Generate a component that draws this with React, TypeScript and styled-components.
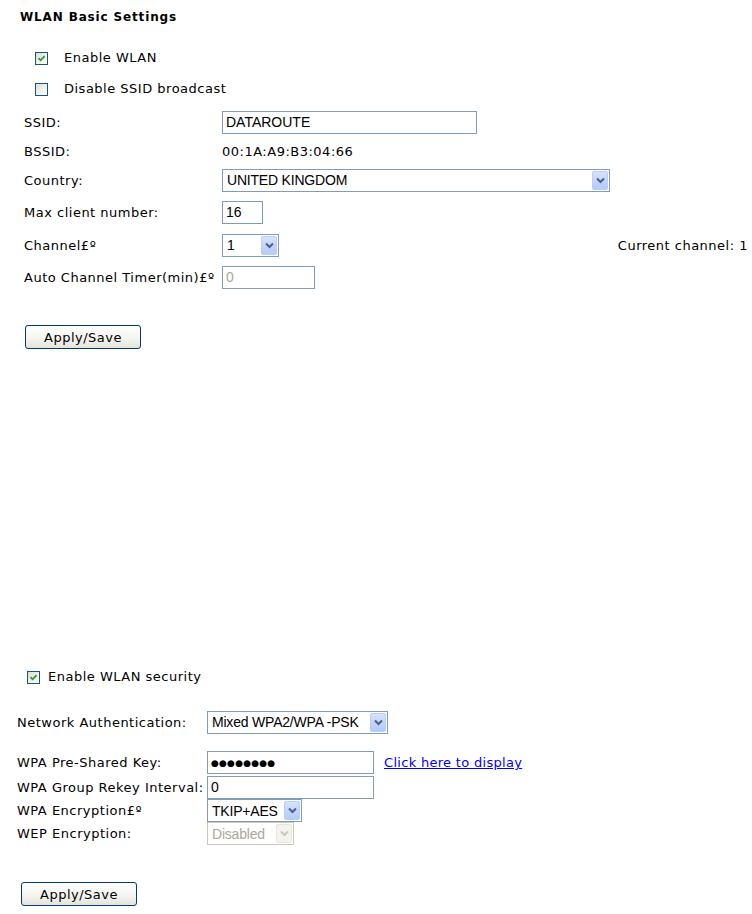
import * as React from 'react';
import styled, { createGlobalStyle } from 'styled-components';

const GlobalStyle = createGlobalStyle`
  html, body {
    margin: 0;
    padding: 0;
    background: #fff;
  }
  body {
    font-family: "DejaVu Sans", Verdana, sans-serif;
    font-size: 13px;
    letter-spacing: 0.5px;
    color: #000;
  }
`;

const Page = styled.div`
  width: 752px;
  height: 914px;
  position: relative;
  overflow: hidden;
`;

const Title = styled.div`
  font-weight: bold;
  font-size: 12px;
  letter-spacing: 0.85px;
  padding: 10px 0 0 20px;
  height: 14px;
  line-height: 14px;
`;

const CheckRow = styled.label<{ $top: number; $left: number; $gap: number }>`
  display: flex;
  align-items: center;
  gap: ${(p) => p.$gap}px;
  margin-top: ${(p) => p.$top}px;
  padding-left: ${(p) => p.$left}px;
  height: 14px;
  line-height: 14px;
`;

const Box = styled.span`
  width: 11px;
  height: 11px;
  border: 1px solid #1c5180;
  background: linear-gradient(135deg, #dcdcd7 0%, #f6f6f4 70%, #fff 100%);
  display: inline-flex;
  align-items: center;
  justify-content: center;
`;

const Table = styled.div<{ $top: number; $left: number; $labelW: number }>`
  display: grid;
  grid-template-columns: ${(p) => p.$labelW}px 1fr;
  margin-top: ${(p) => p.$top}px;
  padding-left: ${(p) => p.$left}px;
`;

const Label = styled.div<{ $h: number }>`
  height: ${(p) => p.$h}px;
  display: flex;
  align-items: center;
  white-space: nowrap;
`;

const Cell = styled.div<{ $h: number }>`
  height: ${(p) => p.$h}px;
  display: flex;
  align-items: center;
  gap: 11px;
  position: relative;
`;

const TextInput = styled.div<{ $w: number; $disabled?: boolean }>`
  box-sizing: border-box;
  width: ${(p) => p.$w}px;
  height: 23px;
  border: 1px solid #7f9db9;
  background: #fff;
  font-family: "Liberation Sans", Arial, sans-serif;
  font-size: 14px;
  letter-spacing: 0;
  color: ${(p) => (p.$disabled ? '#aca899' : '#000')};
  padding: 0 0 0 3px;
  display: flex;
  align-items: center;
  white-space: nowrap;
`;

const Dots = styled.span`
  font-size: 9px;
  letter-spacing: 0.2px;
  font-family: "DejaVu Sans", sans-serif;
`;

const SelectBox = styled.div<{ $w: number; $disabled?: boolean }>`
  box-sizing: border-box;
  width: ${(p) => p.$w}px;
  height: 23px;
  border: 1px solid ${(p) => (p.$disabled ? '#c9c7ba' : '#7f9db9')};
  background: #fff;
  font-family: "Liberation Sans", Arial, sans-serif;
  font-size: 14px;
  letter-spacing: -0.2px;
  color: ${(p) => (p.$disabled ? '#aca899' : '#000')};
  display: flex;
  align-items: center;
  padding: 1px 1px 1px 4px;
  white-space: nowrap;
`;

const SelectText = styled.span`
  flex: 1;
  overflow: hidden;
`;

const Arrow = styled.span<{ $disabled?: boolean }>`
  box-sizing: border-box;
  width: 16px;
  height: 19px;
  border: 1px solid ${(p) => (p.$disabled ? '#e8e6dc' : '#b9cdf7')};
  border-radius: 2px;
  background: ${(p) =>
    p.$disabled
      ? '#f4f3ee'
      : 'linear-gradient(180deg, #d6e3fd 0%, #c2d5fc 50%, #b4cafb 100%)'};
  display: inline-flex;
  align-items: center;
  justify-content: center;
`;

const Static = styled.span`
  white-space: nowrap;
`;

const Right = styled.span`
  position: absolute;
  right: 4px;
  white-space: nowrap;
`;

const Link = styled.a`
  color: #0000ff;
  text-decoration: underline;
  letter-spacing: 0.3px;
  white-space: nowrap;
  margin-left: -1px;
`;

const Button = styled.button<{ $top: number; $left: number }>`
  display: block;
  margin-top: ${(p) => p.$top}px;
  margin-left: ${(p) => p.$left}px;
  box-sizing: border-box;
  width: 116px;
  height: 24px;
  border: 1px solid #003c74;
  border-radius: 3px;
  background: linear-gradient(180deg, #ffffff 0%, #f3f3ef 60%, #e4e3da 100%);
  font-family: "DejaVu Sans", Verdana, sans-serif;
  font-size: 13px;
  letter-spacing: 0.5px;
  color: #000;
  padding: 0;
`;

function Check({ on }: { on: boolean }) {
  return (
    <Box>
      {on && (
        <svg width="9" height="9" viewBox="0 0 9 9">
          <path d="M1.5 4.2 L3.6 6.3 L7.6 2.1" fill="none" stroke="#21a121" strokeWidth="1.8" />
        </svg>
      )}
    </Box>
  );
}

function Select({ w, value, disabled }: { w: number; value: string; disabled?: boolean }) {
  const c = disabled ? '#c9c7ba' : '#4d6185';
  return (
    <SelectBox $w={w} $disabled={disabled}>
      <SelectText>{value}</SelectText>
      <Arrow $disabled={disabled}>
        <svg width="9" height="7" viewBox="0 0 9 7">
          <path d="M1 1.5 L4.5 5 L8 1.5" fill="none" stroke={c} strokeWidth="2" />
        </svg>
      </Arrow>
    </SelectBox>
  );
}

export default function App() {
  return (
    <Page>
      <GlobalStyle />
      <Title>WLAN Basic Settings</Title>
      <CheckRow $top={27} $left={35} $gap={16}>
        <Check on />
        <span>Enable WLAN</span>
      </CheckRow>
      <CheckRow $top={17} $left={35} $gap={16}>
        <Check on={false} />
        <span>Disable SSID broadcast</span>
      </CheckRow>

      <Table $top={11} $left={24} $labelW={198}>
        <Label $h={30}>SSID:</Label>
        <Cell $h={30}><TextInput $w={255}>DATAROUTE</TextInput></Cell>
        <Label $h={29}>BSSID:</Label>
        <Cell $h={29}><Static>00:1A:A9:B3:04:66</Static></Cell>
        <Label $h={28}>Country:</Label>
        <Cell $h={28}><Select w={388} value="UNITED KINGDOM" /></Cell>
        <Label $h={36}>Max client number:</Label>
        <Cell $h={36}><TextInput $w={41}>16</TextInput></Cell>
        <Label $h={30}>Channel£º</Label>
        <Cell $h={30}>
          <Select w={57} value="1" />
          <Right>Current channel: 1</Right>
        </Cell>
        <Label $h={34}>Auto Channel Timer(min)£º</Label>
        <Cell $h={34}><TextInput $w={93} $disabled>0</TextInput></Cell>
      </Table>

      <Button $top={31} $left={25}>Apply/Save</Button>

      <CheckRow $top={321} $left={27} $gap={8}>
        <Check on />
        <span>Enable WLAN security</span>
      </CheckRow>

      <Table $top={24} $left={17} $labelW={190}>
        <Label $h={28}>Network Authentication:</Label>
        <Cell $h={28}><Select w={181} value="Mixed WPA2/WPA -PSK" /></Cell>
      </Table>

      <Table $top={14} $left={17} $labelW={190}>
        <Label $h={25}>WPA Pre-Shared Key:</Label>
        <Cell $h={25}>
          <TextInput $w={167}><Dots>●●●●●●●●</Dots></TextInput>
          <Link href="#">Click here to display</Link>
        </Cell>
        <Label $h={24}>WPA Group Rekey Interval:</Label>
        <Cell $h={24}><TextInput $w={167}>0</TextInput></Cell>
        <Label $h={23}>WPA Encryption£º</Label>
        <Cell $h={23}><Select w={95} value="TKIP+AES" /></Cell>
        <Label $h={23}>WEP Encryption:</Label>
        <Cell $h={23}><Select w={87} value="Disabled" disabled /></Cell>
      </Table>

      <Button $top={37} $left={21}>Apply/Save</Button>
    </Page>
  );
}
